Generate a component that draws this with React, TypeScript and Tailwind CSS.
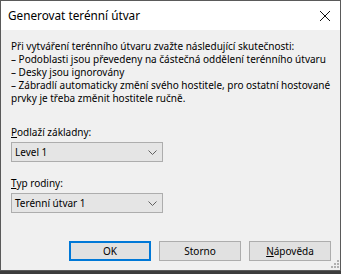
import React from 'react';

const font = { fontFamily: '"Noto Sans", "Open Sans", sans-serif' };

const notes = [
  'Při vytváření terénního útvaru zvažte následující skutečnosti:',
  '– Podoblasti jsou převedeny na částečná oddělení terénního útvaru',
  '– Desky jsou ignorovány',
  '– Zábradlí automaticky změní svého hostitele, pro ostatní hostované',
  'prvky je třeba změnit hostitele ručně.',
];

const Chevron: React.FC = () => (
  <svg width="9" height="5" viewBox="0 0 9 5" className="shrink-0">
    <path d="M0.5 0.5 L4.5 4.5 L8.5 0.5" fill="none" stroke="#606060" strokeWidth="1" />
  </svg>
);

const Combo: React.FC<{ value: string }> = ({ value }) => (
  <div className="mt-[3px] flex h-[20px] w-[152px] items-center justify-between border border-[#adadad] bg-[#e5e5e5] pl-[3px] pr-[5px]">
    <span>{value}</span>
    <Chevron />
  </div>
);

const Button: React.FC<{ primary?: boolean; children: React.ReactNode }> = ({ primary, children }) => (
  <button
    className={
      primary
        ? 'flex h-[20px] w-[82px] items-center justify-center border-2 border-[#0078d7] bg-[#e1e1e1] text-black'
        : 'flex h-[20px] w-[82px] items-center justify-center border border-[#adadad] bg-[#e1e1e1] text-black'
    }
  >
    {children}
  </button>
);

const App: React.FC = () => {
  return (
    <div className="h-[274px] w-[341px] bg-[#3c3c3c]" style={font}>
      <div className="flex h-[271px] w-[341px] flex-col border border-[#5a5a5a] text-[10px] leading-[13px] text-black">
        {/* title bar */}
        <div className="flex h-[29px] shrink-0 items-center justify-between bg-white pl-[7px] pr-[10px]">
          <span className="text-[11.75px]">Generovat terénní útvar</span>
          <svg width="10" height="10" viewBox="0 0 10 10">
            <path d="M0 0 L10 10 M10 0 L0 10" stroke="#111" strokeWidth="1" />
          </svg>
        </div>

        {/* body */}
        <div className="relative flex flex-1 flex-col bg-[#f0f0f0] pl-[10px] pt-[10px]">
          <div>
            {notes.map((line) => (
              <div key={line} className="whitespace-nowrap">
                {line}
              </div>
            ))}
          </div>

          <div className="mt-[21px]">
            <span className="underline">P</span>odlaží základny:
          </div>
          <Combo value="Level 1" />

          <div className="mt-[15px]">
            <span className="underline">T</span>yp rodiny:
          </div>
          <Combo value="Terénní útvar 1" />

          <div className="mt-[28px] flex gap-[8px] pl-[58px]">
            <Button primary>OK</Button>
            <Button>Storno</Button>
            <Button>
              <span>
                <span className="underline">N</span>ápověda
              </span>
            </Button>
          </div>

          {/* size grip */}
          <svg width="9" height="9" viewBox="0 0 9 9" className="absolute bottom-[2px] right-[1px]">
            <rect x="7" y="1" width="2" height="2" fill="#b0b0b0" />
            <rect x="4" y="4" width="2" height="2" fill="#b0b0b0" />
            <rect x="7" y="4" width="2" height="2" fill="#b0b0b0" />
            <rect x="1" y="7" width="2" height="2" fill="#b0b0b0" />
            <rect x="4" y="7" width="2" height="2" fill="#b0b0b0" />
            <rect x="7" y="7" width="2" height="2" fill="#b0b0b0" />
          </svg>
        </div>
      </div>
    </div>
  );
};

export default App;
